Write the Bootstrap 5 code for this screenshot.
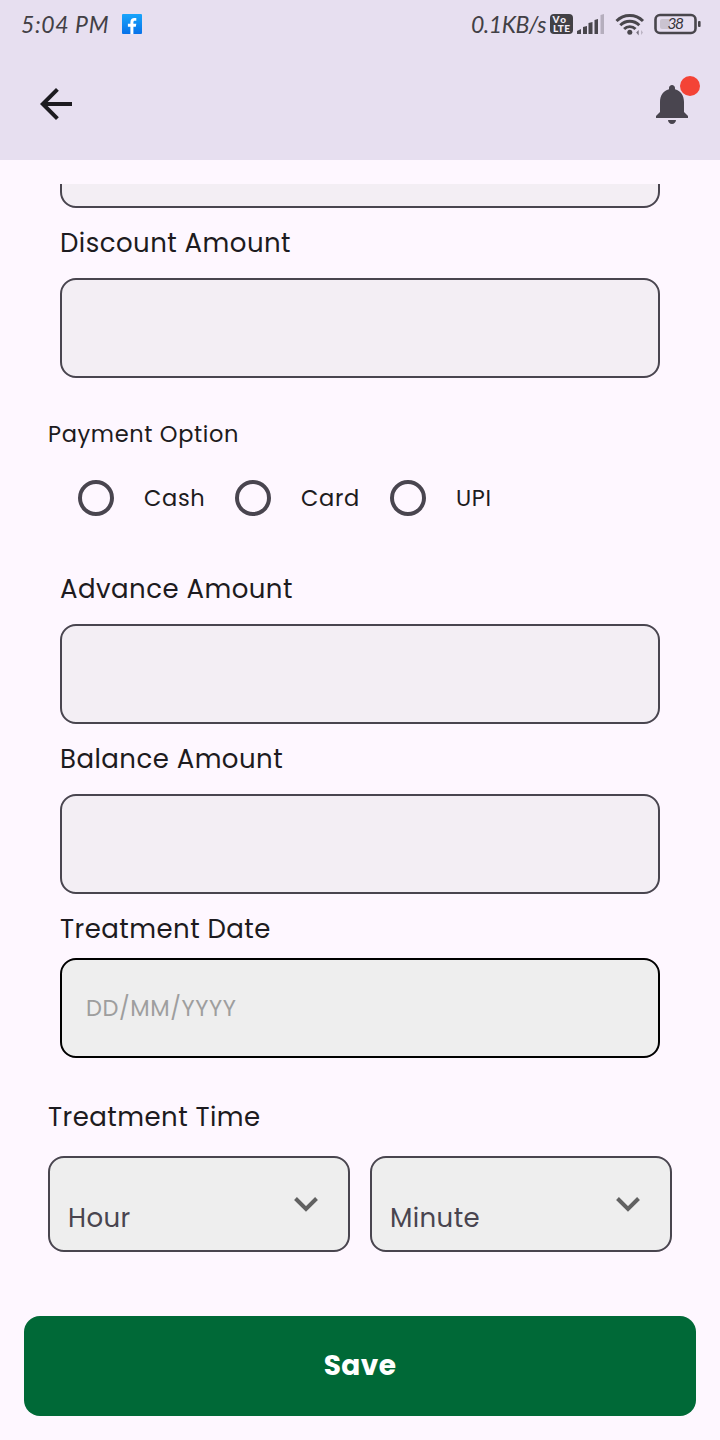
<!DOCTYPE html>
<html lang="en">
<head>
<meta charset="utf-8">
<meta name="viewport" content="width=device-width, initial-scale=1">
<title>Payment</title>
<link href="https://cdn.jsdelivr.net/npm/bootstrap@5.3.0/dist/css/bootstrap.min.css" rel="stylesheet">
<style>
body{background:#fef7ff;color:#1d1b20;font-family:Poppins,Inter,"Liberation Sans",sans-serif;font-size:26px;line-height:1;height:1440px;overflow:hidden}
.top-area{background:#e7dff0;height:160px}
.status{height:48px;font-family:Lato,"Liberation Sans",sans-serif;font-style:italic;font-size:23px;color:#424045;padding:0 19px 0 21px}
.clock{letter-spacing:.6px;width:101px}
.speed{letter-spacing:-.45px}
.app-bar{height:112px;padding:0 20px 0 32px}
.bell{width:48px;height:48px;position:relative}
.dot{position:absolute;left:32px;top:-4px;width:20px;height:20px;background:#f44336}
.page{padding:24px 24px 0}
.field-group{padding:0 36px}
.lbl{height:70px;margin:0;display:flex;align-items:center;white-space:nowrap;letter-spacing:.46px}
.lbl.date-lbl{height:64px;padding-top:6px}
.lbl.time-lbl{height:78px}
.form-control.box{height:100px;border:2px solid #49454f;border-radius:16px;background:#f3eef4;box-shadow:none;padding:0 24px;font-size:22.5px;letter-spacing:.6px;color:#1d1b20}
.form-control.date{border-color:#000;background:#eee}
.date::placeholder{color:#9e9e9e;opacity:1}
.clip{height:24px;overflow:hidden;display:flex;align-items:flex-end}
.clip .box{flex:none}
.pay{height:176px;padding:44px 24px 0;font-size:22.5px;letter-spacing:.65px}
.pay-title{height:24px;line-height:24px}
.pay-options{padding:34px 0 0 30px}
.form-check-input.ring{width:36px;height:36px;border:4px solid #49454f;background:transparent;margin:0 30px 0 0;float:none;flex:none}
.time{padding:20px 24px 0}
.picker{height:96px;border:2px solid #49454f;border-radius:16px;background:#eee;color:#49454f;padding:0 30px 0 18px;letter-spacing:.4px}
.picker span{padding-top:28px}
.btn.save{height:100px;border-radius:16px;background:#006937;color:#fff;font-size:28px;letter-spacing:.4px;font-weight:700;border:0;margin-top:64px}
svg{flex:none;display:block}
</style>
</head>
<body>
<header class="top-area">
  <div class="status d-flex align-items-center">
    <span class="clock">5:04 PM</span>
    <svg width="20" height="20" viewBox="0 0 20 20"><defs><linearGradient id="g" x2="0" y2="1"><stop stop-color="#19a5fb"/><stop offset="1" stop-color="#0872e9"/></linearGradient></defs><rect width="20" height="20" rx="1" fill="url(#g)"/><path d="M8.400 20v-7.200H5.900V9.800h2.500V8.200c0-2.900 1.700-4.200 3.900-4.200h2v2.700h-1.300c-1.200 0-1.600.5-1.600 1.600v1.500h2.900l-.5 3h-2.400V20z" fill="#fff"/></svg>
    <div class="ms-auto d-flex align-items-center">
      <span class="speed">0.1KB/s</span>
      <svg width="151" height="24" viewBox="0 0 151 24" style="margin-left:4px" font-family="Lato,sans-serif">
        <rect y="2" width="23" height="20" rx="4" fill="#424045"/>
        <text x="2.500" y="10.500" font-size="10" font-weight="900" font-style="normal" fill="#f3edf7" textLength="13.500">Vo</text>
        <text x="3" y="20" font-size="10" font-weight="900" font-style="normal" fill="#f3edf7" textLength="17">LTE</text>
        <g fill="#49464c"><path d="M27 22v-3l4-2v5z"/><path d="M33 22v-7l4-1v8z"/><path d="M38.500 22V11l4-1v12z"/><path d="M44.500 22V8l3.500-1v15z"/><path d="M50.500 22V3l3.500-1v20z" fill="#b5aebd"/></g>
        <g fill="none" stroke="#49464c" stroke-width="2.900"><path d="M66.500 9.100a18.600 18.600 0 0 1 26.500 0"/><path d="M70.300 13.200a13.300 13.300 0 0 1 19 0"/><path d="M74.100 17.100a7.900 7.900 0 0 1 11.400 0"/></g>
        <circle cx="79.800" cy="20.200" r="2.500" fill="#49464c"/><path d="M86.200 20.500l2.500-2.500v5.500z" fill="#77717e"/><path d="M91 18v5l2-2.500z" fill="#bbb4c3"/>
        <rect x="105.500" y="3" width="40" height="18" rx="4.500" fill="none" stroke="#49464c" stroke-width="2.600"/><path d="M112 7h8v10h-8q-2 0-2-2V9q0-2 2-2z" fill="#cac3d0"/><rect x="148" y="9" width="2.600" height="6" rx="1" fill="#49464c"/>
        <text x="117.500" y="17.300" font-size="15.500" fill="#38353b" textLength="16.500">38</text>
      </svg>
    </div>
  </div>
  <nav class="app-bar d-flex align-items-center justify-content-between">
    <svg width="48" height="48" viewBox="0 0 24 24" fill="#1d1b20"><path d="M20 11H7.830l5.590-5.590L12 4l-8 8 8 8 1.410-1.410L7.830 13H20z"/></svg>
    <div class="bell me-1"><svg width="48" height="48" viewBox="0 0 24 24" fill="#49454f"><path d="M12 22c1.100 0 2-.9 2-2h-4c0 1.100.89 2 2 2zm6-6v-5c0-3.070-1.640-5.640-4.500-6.320V4c0-.83-.67-1.500-1.500-1.500s-1.500.67-1.500 1.500v.68C7.630 5.360 6 7.920 6 11v5l-2 2v1h16v-1l-2-2z"/></svg><span class="dot rounded-circle"></span></div>
  </nav>
</header>
<main class="page">
  <section class="field-group">
    <div class="clip"><input class="form-control box" aria-label="Total"></div>
    <label class="lbl" for="discount">Discount Amount</label>
    <input class="form-control box" id="discount">
  </section>
  <section class="pay">
    <div class="pay-title">Payment Option</div>
    <div class="d-flex pay-options">
      <label class="d-flex align-items-center" style="width:157px"><input class="form-check-input ring" type="radio" name="pay">Cash</label>
      <label class="d-flex align-items-center" style="width:155px"><input class="form-check-input ring" type="radio" name="pay">Card</label>
      <label class="d-flex align-items-center"><input class="form-check-input ring" type="radio" name="pay">UPI</label>
    </div>
  </section>
  <section class="field-group">
    <label class="lbl" for="advance">Advance Amount</label>
    <input class="form-control box" id="advance">
    <label class="lbl" for="balance">Balance Amount</label>
    <input class="form-control box" id="balance">
    <label class="lbl date-lbl" for="date">Treatment Date</label>
    <input class="form-control box date" id="date" placeholder="DD/MM/YYYY">
  </section>
  <section class="time">
    <div class="lbl time-lbl">Treatment Time</div>
    <div class="d-flex" style="gap:20px">
      <div class="picker flex-fill w-50 d-flex align-items-center justify-content-between"><span>Hour</span><svg width="24" height="16" viewBox="0 0 24 16"><path d="M1.500 2.500L12 13 22.500 2.500" fill="none" stroke="#616161" stroke-width="4"/></svg></div>
      <div class="picker flex-fill w-50 d-flex align-items-center justify-content-between"><span>Minute</span><svg width="24" height="16" viewBox="0 0 24 16"><path d="M1.500 2.500L12 13 22.500 2.500" fill="none" stroke="#616161" stroke-width="4"/></svg></div>
    </div>
  </section>
  <button class="btn save w-100">Save</button>
</main>
<script src="https://cdn.jsdelivr.net/npm/bootstrap@5.3.0/dist/js/bootstrap.bundle.min.js"></script>
</body>
</html>
